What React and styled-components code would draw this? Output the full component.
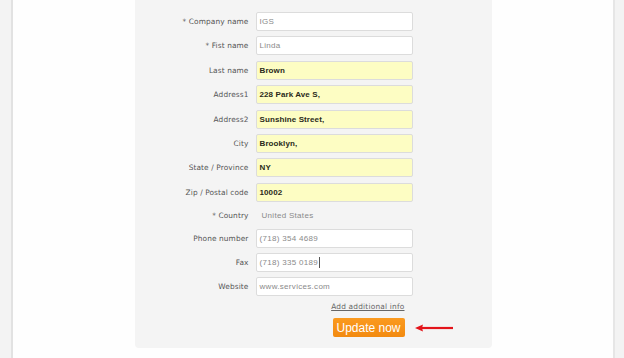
import React from "react";
import styled, { createGlobalStyle } from "styled-components";

const Global = createGlobalStyle`
  html, body { margin: 0; padding: 0; background: #f3f3f3; }
  body { font-family: "Liberation Sans", Arial, sans-serif; }
`;

const Page = styled.div`
  display: flex;
  height: 358px;
  width: 624px;
  background: #f3f3f3;
  overflow: hidden;
`;

const Main = styled.div`
  margin-left: 11px;
  width: 600px;
  background: #fefefe;
  border-left: 2px solid #e2e2e2;
  border-right: 2px solid #e6e6e6;
  display: flex;
  justify-content: center;
`;

const Panel = styled.div`
  width: 357px;
  height: 348px;
  background: #f4f4f4;
  border-radius: 0 0 4px 4px;
  box-sizing: border-box;
  padding-top: 12px;
`;

const Form = styled.div`
  display: grid;
  grid-template-columns: 114px 157px;
  column-gap: 7px;
  row-gap: 5.4px;
  align-items: center;
`;

const Label = styled.div`
  text-align: right;
  font-family: "DejaVu Sans", Verdana, sans-serif;
  font-size: 7.4px;
  color: #555;
  letter-spacing: 0.1px;
`;

const Field = styled.div`
  height: 19px;
  box-sizing: border-box;
  border: 1px solid #dcdcdc;
  border-radius: 2px;
  background: ${(p) => (p.$filled ? "#fdfdc3" : "#ffffff")};
  display: flex;
  align-items: center;
  padding-left: 3px;
  font-size: 8px;
  font-weight: ${(p) => (p.$filled ? 700 : 400)};
  color: ${(p) => (p.$filled ? "#2a2a1a" : "#8a8a8a")};
  letter-spacing: ${(p) => (p.$filled ? "0.1px" : "0.3px")};
`;

const Plain = styled.div`
  height: 16px;
  display: flex;
  align-items: center;
  padding-left: 6px;
  font-size: 8px;
  color: #8a8a8a;
  letter-spacing: 0.3px;
`;

const Caret = styled.span`
  display: inline-block;
  width: 1px;
  height: 11px;
  background: #555;
  margin-left: 1px;
`;

const Actions = styled.div`
  display: flex;
  flex-direction: column;
  align-items: flex-end;
  width: 270px;
  margin-top: 6px;
`;

const MoreLink = styled.a`
  font-family: "DejaVu Sans", Verdana, sans-serif;
  font-size: 7.4px;
  color: #666;
  text-decoration: underline;
  letter-spacing: 0.2px;
`;

const ButtonRow = styled.div`
  display: flex;
  align-items: center;
  margin-top: 7px;
  margin-right: -49px;
  gap: 10px;
`;

const Button = styled.button`
  width: 72px;
  height: 19px;
  border: none;
  border-radius: 2px;
  background: linear-gradient(#fb9a1f, #f28a10);
  color: #fff;
  font-family: "Liberation Sans", Arial, sans-serif;
  font-size: 12px;
  padding: 0;
`;

const rows = [
  { label: "* Company name", value: "IGS" },
  { label: "* Fist name", value: "Linda" },
  { label: "Last name", value: "Brown", filled: true },
  { label: "Address1", value: "228 Park Ave S,", filled: true },
  { label: "Address2", value: "Sunshine Street,", filled: true },
  { label: "City", value: "Brooklyn,", filled: true },
  { label: "State / Province", value: "NY", filled: true },
  { label: "Zip / Postal code", value: "10002", filled: true },
  { label: "* Country", value: "United States", plain: true },
  { label: "Phone number", value: "(718) 354 4689" },
  { label: "Fax", value: "(718) 335 0189", caret: true },
  { label: "Website", value: "www.services.com" },
];

export default function App() {
  return (
    <>
      <Global />
      <Page>
        <Main>
          <Panel>
            <Form>
              {rows.map((r) => (
                <React.Fragment key={r.label}>
                  <Label>{r.label}</Label>
                  {r.plain ? (
                    <Plain>{r.value}</Plain>
                  ) : (
                    <Field $filled={r.filled}>
                      {r.value}
                      {r.caret && <Caret />}
                    </Field>
                  )}
                </React.Fragment>
              ))}
            </Form>
            <Actions>
              <MoreLink>Add additional info</MoreLink>
              <ButtonRow>
                <Button>Update now</Button>
                <svg width="39" height="8" viewBox="0 0 39 8">
                  <path d="M6 4 H38" stroke="#e3141a" strokeWidth="2.2" />
                  <path d="M0 4 L8 0.5 L7 4 L8 7.5 Z" fill="#e3141a" />
                </svg>
              </ButtonRow>
            </Actions>
          </Panel>
        </Main>
      </Page>
    </>
  );
}
